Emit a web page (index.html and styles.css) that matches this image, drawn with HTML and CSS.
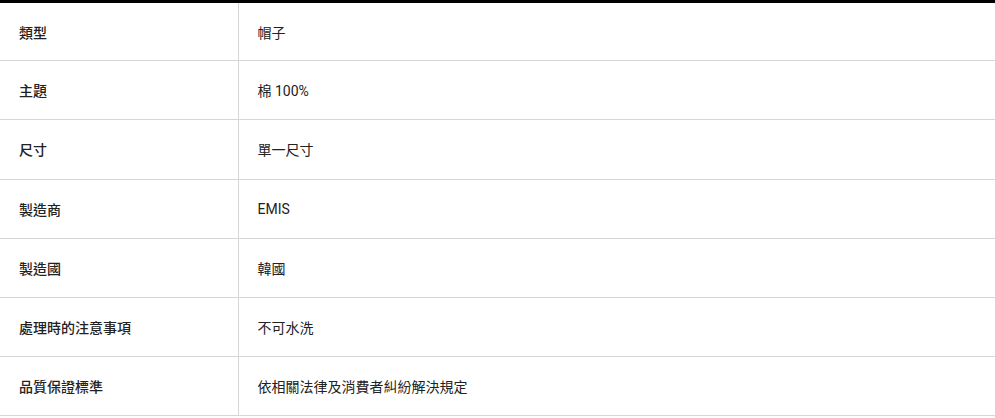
FILE: index.html
```html
<!DOCTYPE html>
<html lang="zh-Hant">
<head>
<meta charset="utf-8">
<link rel="stylesheet" href="styles.css">
</head>
<body>
<table class="spec">
  <tbody>
    <tr><th>類型</th><td>帽子</td></tr>
    <tr><th>主題</th><td>棉 100%</td></tr>
    <tr><th>尺寸</th><td>單一尺寸</td></tr>
    <tr><th>製造商</th><td>EMIS</td></tr>
    <tr><th>製造國</th><td>韓國</td></tr>
    <tr><th>處理時的注意事項</th><td>不可水洗</td></tr>
    <tr><th>品質保證標準</th><td>依相關法律及消費者糾紛解決規定</td></tr>
  </tbody>
</table>
</body>
</html>
```
FILE: styles.css
```css
html, body {
  margin: 0;
  padding: 0;
  background: #fff;
}
body {
  font-family: Roboto, "Noto Sans CJK TC", sans-serif;
  font-size: 14px;
  color: #222;
}
.spec {
  width: 100%;
  border-collapse: collapse;
  border-top: 3px solid #000;
}
.spec tr {
  border-bottom: 1px solid #d6d6d6;
}
.spec th,
.spec td {
  height: 59.2px;
  padding: 0 20px 0 19px;
  text-align: left;
  vertical-align: middle;
  font-weight: 400;
  box-sizing: border-box;
}
.spec th {
  width: 238px;
  font-weight: 500;
  border-right: 1px solid #d6d6d6;
}
```
